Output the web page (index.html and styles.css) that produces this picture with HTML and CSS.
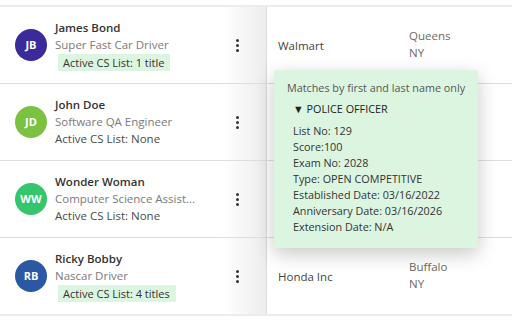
FILE: index.html
```html
<!DOCTYPE html>
<html>
<head>
<meta charset="utf-8">
<link rel="stylesheet" href="styles.css">
</head>
<body>
<div class="table">
  <div class="row">
    <div class="person">
      <div class="avatar av-jb">JB</div>
      <div class="info">
        <div class="name">James Bond</div>
        <div class="title">Super Fast Car Driver</div>
        <div class="cs badge">Active CS List: 1 title</div>
      </div>
      <div class="dots"><i></i><i></i><i></i></div>
    </div>
    <div class="company">Walmart</div>
    <div class="loc"><div>Queens</div><div>NY</div></div>
  </div>
  <div class="row">
    <div class="person">
      <div class="avatar av-jd">JD</div>
      <div class="info">
        <div class="name">John Doe</div>
        <div class="title">Software QA Engineer</div>
        <div class="cs">Active CS List: None</div>
      </div>
      <div class="dots"><i></i><i></i><i></i></div>
    </div>
    <div class="company"></div>
    <div class="loc"></div>
  </div>
  <div class="row">
    <div class="person">
      <div class="avatar av-ww">WW</div>
      <div class="info">
        <div class="name">Wonder Woman</div>
        <div class="title">Computer Science Assist...</div>
        <div class="cs">Active CS List: None</div>
      </div>
      <div class="dots"><i></i><i></i><i></i></div>
    </div>
    <div class="company"></div>
    <div class="loc"></div>
  </div>
  <div class="row last">
    <div class="person">
      <div class="avatar av-rb">RB</div>
      <div class="info">
        <div class="name">Ricky Bobby</div>
        <div class="title">Nascar Driver</div>
        <div class="cs badge">Active CS List: 4 titles</div>
      </div>
      <div class="dots"><i></i><i></i><i></i></div>
    </div>
    <div class="company">Honda Inc</div>
    <div class="loc"><div>Buffalo</div><div>NY</div></div>
  </div>
</div>

<div class="popover">
  <div class="pop-head">Matches by first and last name only</div>
  <div class="pop-sub">▼ POLICE OFFICER</div>
  <div class="pop-list">
    <div>List No: 129</div>
    <div>Score:100</div>
    <div>Exam No: 2028</div>
    <div>Type: OPEN COMPETITIVE</div>
    <div>Established Date: 03/16/2022</div>
    <div>Anniversary Date: 03/16/2026</div>
    <div>Extension Date: N/A</div>
  </div>
</div>
</body>
</html>
```

FILE: styles.css
```css
html, body {
  margin: 0;
  padding: 0;
  background: #fff;
  font-family: "Open Sans", "Noto Sans", sans-serif;
  color: #333;
  width: 512px;
  height: 320px;
  overflow: hidden;
}

.table {
  margin-top: 5px;
  border-top: 2px solid #ececec;
}

.row {
  display: grid;
  grid-template-columns: 267px 131px 1fr;
  height: 76px;
  border-bottom: 1px solid #dedede;
}

.row.last {
  border-bottom: 2px solid #ececec;
}

.person {
  display: flex;
  align-items: center;
  padding-left: 15px;
  border-right: 1px solid #dadada;
  background: linear-gradient(to right, #fff 0, #fff 222px, #ededed 100%);
}

.avatar {
  width: 32px;
  height: 32px;
  border-radius: 50%;
  color: #fff;
  font-size: 11px;
  font-weight: 700;
  display: flex;
  align-items: center;
  justify-content: center;
  flex: none;
  margin-top: -1px;
}

.av-jb { background: #3a2a9a; }
.av-jd { background: #7cc242; }
.av-ww { background: #35c56c; }
.av-rb { background: #2a58a2; }

.info {
  margin-left: 8px;
  width: 175px;
  display: flex;
  flex-direction: column;
  align-items: flex-start;
  margin-top: -1px;
}

.name {
  font-size: 11.5px;
  font-weight: 600;
  line-height: 17px;
  color: #333;
}

.title {
  font-size: 11.5px;
  line-height: 17px;
  color: #7a7a7a;
  white-space: nowrap;
}

.cs {
  font-size: 11.5px;
  line-height: 17px;
  color: #4a4a4a;
}

.badge {
  margin-left: 3px;
  margin-top: 1px;
  padding: 0 6px 0 5px;
  font-size: 11px;
  background: #dcf5e0;
  color: #333;
}

.dots {
  margin-left: 6px;
  display: flex;
  flex-direction: column;
  gap: 2px;
  width: 4px;
}

.dots i {
  display: block;
  width: 3px;
  height: 3px;
  border-radius: 50%;
  background: #333;
}

.company {
  display: flex;
  align-items: center;
  padding-left: 11px;
  font-size: 11.5px;
  color: #444;
}

.loc {
  display: flex;
  flex-direction: column;
  justify-content: center;
  padding-left: 11px;
  font-size: 11.5px;
  line-height: 17px;
  color: #6a6a6a;
  margin-top: -2px;
}

.popover {
  position: absolute;
  left: 274px;
  top: 70px;
  width: 204px;
  height: 178px;
  box-sizing: border-box;
  padding: 10px 0 0 13px;
  background: #dcf5e0;
  box-shadow: 0 6px 18px rgba(0, 0, 0, 0.22);
  font-size: 10.8px;
  color: #333;
}

.pop-head {
  line-height: 16px;
  color: #555;
}

.pop-sub {
  margin-top: 5px;
  padding-left: 6px;
  line-height: 16px;
  color: #222;
}

.pop-list {
  margin-top: 6px;
  padding-left: 6px;
  line-height: 16px;
  color: #333;
}
```
